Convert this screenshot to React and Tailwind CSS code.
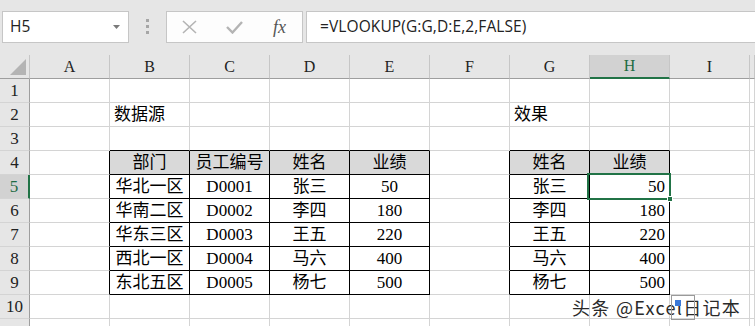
import React from 'react';

const cols = ['A', 'B', 'C', 'D', 'E', 'F', 'G', 'H', 'I', ''];

const rowsData = {
  2: { 1: ['数据源', 'left'], 6: ['效果', 'left'] },
  4: {
    1: ['部门', 'center'],
    2: ['员工编号', 'center'],
    3: ['姓名', 'center'],
    4: ['业绩', 'center'],
    6: ['姓名', 'center'],
    7: ['业绩', 'center'],
  },
};

const records = [
  ['华北一区', 'D0001', '张三', '50'],
  ['华南二区', 'D0002', '李四', '180'],
  ['华东三区', 'D0003', '王五', '220'],
  ['西北一区', 'D0004', '马六', '400'],
  ['东北五区', 'D0005', '杨七', '500'],
];

records.forEach((rec, i) => {
  rowsData[5 + i] = {
    1: [rec[0], 'center'],
    2: [rec[1], 'center'],
    3: [rec[2], 'center'],
    4: [rec[3], 'center'],
    6: [rec[2], 'center'],
    7: [rec[3], 'right'],
  };
});

function inTable(r, c) {
  if (r < 4 || r > 9) return false;
  return (c >= 1 && c <= 4) || c === 6 || c === 7;
}

function Cell({ r, c }) {
  const content = rowsData[r] && rowsData[r][c];
  const rightBlack = inTable(r, c) || inTable(r, c + 1);
  const bottomBlack = inTable(r, c) || inTable(r + 1, c);
  const align = content ? content[1] : 'center';
  const alignCls =
    align === 'left' ? 'justify-start pl-[4px]' : align === 'right' ? 'justify-end pr-[4px]' : 'justify-center';
  return (
    <div
      className={[
        'flex items-center overflow-hidden whitespace-nowrap border-r border-b text-[17px] text-black',
        rightBlack ? 'border-r-black' : 'border-r-[#d4d4d4]',
        bottomBlack ? 'border-b-black' : 'border-b-[#d4d4d4]',
        inTable(r, c) && r === 4 ? 'bg-[#d9d9d9]' : 'bg-white',
        alignCls,
      ].join(' ')}
    >
      {content ? content[0] : null}
    </div>
  );
}

function FormulaBar() {
  return (
    <div className="h-[55px] bg-[#e6e6e6] flex items-start pt-[11px] pl-[2px] overflow-hidden">
      <div className="w-[127px] h-[32px] shrink-0 bg-white border border-[#c6c6c6] flex items-center justify-between pl-[7px] pr-[8px]">
        <span className="text-[15.5px] text-[#222] font-['Open_Sans',sans-serif]">H5</span>
        <svg width="7" height="4" viewBox="0 0 7 4">
          <path d="M0 0 L7 0 L3.5 4 Z" fill="#7a7a7a" />
        </svg>
      </div>
      <div className="ml-[17px] mt-[8px] flex flex-col gap-[3px] shrink-0">
        <span className="w-[3px] h-[3px] bg-[#a6a6a6]" />
        <span className="w-[3px] h-[3px] bg-[#a6a6a6]" />
        <span className="w-[3px] h-[3px] bg-[#a6a6a6]" />
      </div>
      <div className="ml-[17px] w-[137px] h-[32px] shrink-0 bg-[#fdfdfd] border border-[#c6c6c6] flex items-center">
        <div className="w-[45px] flex justify-center">
          <svg width="15" height="14" viewBox="0 0 15 14">
            <path d="M1 1 L14 13 M14 1 L1 13" stroke="#b4b4b4" strokeWidth="1.6" fill="none" />
          </svg>
        </div>
        <div className="w-[45px] flex justify-center">
          <svg width="17" height="14" viewBox="0 0 17 14">
            <path d="M1 7 L6.5 12.5 L16 2" stroke="#b4b4b4" strokeWidth="2.4" fill="none" />
          </svg>
        </div>
        <div className="w-[45px] flex justify-center">
          <span className="text-[18px] italic font-['Liberation_Serif',serif] text-[#555] leading-none">fx</span>
        </div>
      </div>
      <div className="ml-[3px] w-[470px] h-[32px] shrink-0 bg-white border border-[#c6c6c6] flex items-center pl-[13px]">
        <span className="text-[15.5px] tracking-[0.1px] text-[#222] font-['Open_Sans',sans-serif]">=VLOOKUP(G:G,D:E,2,FALSE)</span>
      </div>
    </div>
  );
}

export default function App() {
  const rows = [1, 2, 3, 4, 5, 6, 7, 8, 9, 10, 11];
  return (
    <div className="relative w-[755px] h-[326px] overflow-hidden bg-white font-['Liberation_Serif','Noto_Sans_CJK_SC',serif]">
      <FormulaBar />
      <div className="grid grid-cols-[30px_repeat(9,80px)_1fr] auto-rows-[24px]">
        <div className="bg-[#e6e6e6] border-r border-b border-r-[#c6c6c6] border-b-[#9e9e9e] flex items-end justify-end pr-[3px] pb-[3px]">
          <svg width="16" height="16" viewBox="0 0 16 16">
            <path d="M16 0 L16 16 L0 16 Z" fill="#b4b4b4" />
          </svg>
        </div>
        {cols.map((l, i) =>
          l === 'H' ? (
            <div
              key={i}
              className="bg-[#d2d2d2] border-r border-r-[#c6c6c6] border-b-2 border-b-[#217346] flex items-center justify-center text-[16px] text-[#1d6b43]"
            >
              {l}
            </div>
          ) : (
            <div
              key={i}
              className="bg-[#e6e6e6] border-r border-b border-r-[#c6c6c6] border-b-[#9e9e9e] flex items-center justify-center text-[16px] text-[#222]"
            >
              {l}
            </div>
          )
        )}
        {rows.map((r) => (
          <React.Fragment key={r}>
            {r === 5 ? (
              <div className="bg-[#d2d2d2] border-r-2 border-b border-r-[#217346] border-b-[#d4d4d4] flex items-center justify-center text-[17px] text-[#1d6b43]">
                {r}
              </div>
            ) : (
              <div className="bg-[#e6e6e6] border-r border-b border-r-[#9e9e9e] border-b-[#d4d4d4] flex items-center justify-center text-[17px] text-[#222]">
                {r === 11 ? '' : r}
              </div>
            )}
            {cols.map((_, c) => (
              <Cell key={c} r={r} c={c} />
            ))}
          </React.Fragment>
        ))}
      </div>

      <div className="absolute left-[587px] top-[173px] w-[84px] h-[27px] border-2 border-[#217346]" />
      <div className="absolute left-[667px] top-[196px] w-[6px] h-[6px] bg-[#217346] border border-white" />

      <div className="absolute left-[572px] top-[298px] text-[18px] tracking-[1.3px] leading-none text-[#2a2a2a] font-['Noto_Sans_CJK_SC',sans-serif] whitespace-nowrap [text-shadow:0_0_2px_#fff,0_0_2px_#fff]">
        头条 @Excel日记本
      </div>
      <div className="absolute left-[671px] top-[295px] w-[24px] h-[25px] border border-[#9a9a9a]">
        <div className="absolute left-[3px] top-[4px] w-[6px] h-[6px] bg-[#3a78d8]" />
      </div>
    </div>
  );
}
